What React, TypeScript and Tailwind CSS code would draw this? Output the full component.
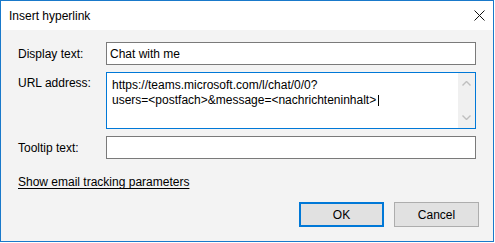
const font = "font-['Segoe_UI','Liberation_Sans',Arial,sans-serif]";

function CloseIcon() {
  return (
    <svg width="11" height="11" viewBox="0 0 11 11" className="block">
      <path d="M0.5 0.5 L10.5 10.5 M10.5 0.5 L0.5 10.5" stroke="#111" strokeWidth="1" fill="none" />
    </svg>
  );
}

function Chevron({ down }: { down?: boolean }) {
  return (
    <svg width="9" height="5" viewBox="0 0 9 5" className="block">
      <path
        d={down ? "M0.5 0.5 L4.5 4.5 L8.5 0.5" : "M0.5 4.5 L4.5 0.5 L8.5 4.5"}
        stroke="#bfbfbf"
        strokeWidth="1.4"
        fill="none"
      />
    </svg>
  );
}

export default function App() {
  return (
    <div className={`h-[243px] w-[495px] bg-white text-[12px] text-black ${font}`}>
      <div className="flex h-[242px] w-[494px] flex-col border border-[#1979ca] bg-[#f3f3f3]">
        {/* title bar */}
        <div className="flex h-[29px] items-center justify-between bg-white pl-[8px] pr-[8px]">
          <span className="leading-4">Insert hyperlink</span>
          <CloseIcon />
        </div>

        {/* form */}
        <div className="grid grid-cols-[88px_1fr] gap-y-[7px] pl-[17px] pr-[17px] pt-[12px]">
          <label className="self-center leading-4">Display text:</label>
          <div className="flex h-[23px] items-center border border-[#7a7a7a] bg-white pl-[3px] leading-4">
            Chat with me
          </div>

          <label className="pt-[3px] leading-4">URL address:</label>
          <div className="flex h-[57px] border border-[#0078d7] bg-white">
            <div className="flex-1 pl-[5px] pt-[5px] leading-[15px]">
              <div>https://teams.microsoft.com/l/chat/0/0?</div>
              <div className="flex items-center">
                users=&lt;postfach&gt;&amp;message=&lt;nachrichteninhalt&gt;
                <span className="ml-[2px] inline-block h-[11px] w-px bg-black" />
              </div>
            </div>
            <div className="flex w-[17px] flex-col items-center justify-between bg-[#f0f0f0] py-[8px]">
              <Chevron />
              <Chevron down />
            </div>
          </div>

          <label className="self-center leading-4">Tooltip text:</label>
          <div className="h-[23px] border border-[#7a7a7a] bg-white" />
        </div>

        <div className="pl-[17px] pt-[14px]">
          <span className="leading-4 underline underline-offset-2">Show email tracking parameters</span>
        </div>

        <div className="mt-auto flex justify-end gap-[10px] pb-[14px] pr-[14px]">
          <button className="h-[25px] w-[85px] border-2 border-[#0078d7] bg-[#e1e1e1] leading-4">OK</button>
          <button className="h-[25px] w-[85px] border border-[#adadad] bg-[#e1e1e1] leading-4">Cancel</button>
        </div>
      </div>
    </div>
  );
}
